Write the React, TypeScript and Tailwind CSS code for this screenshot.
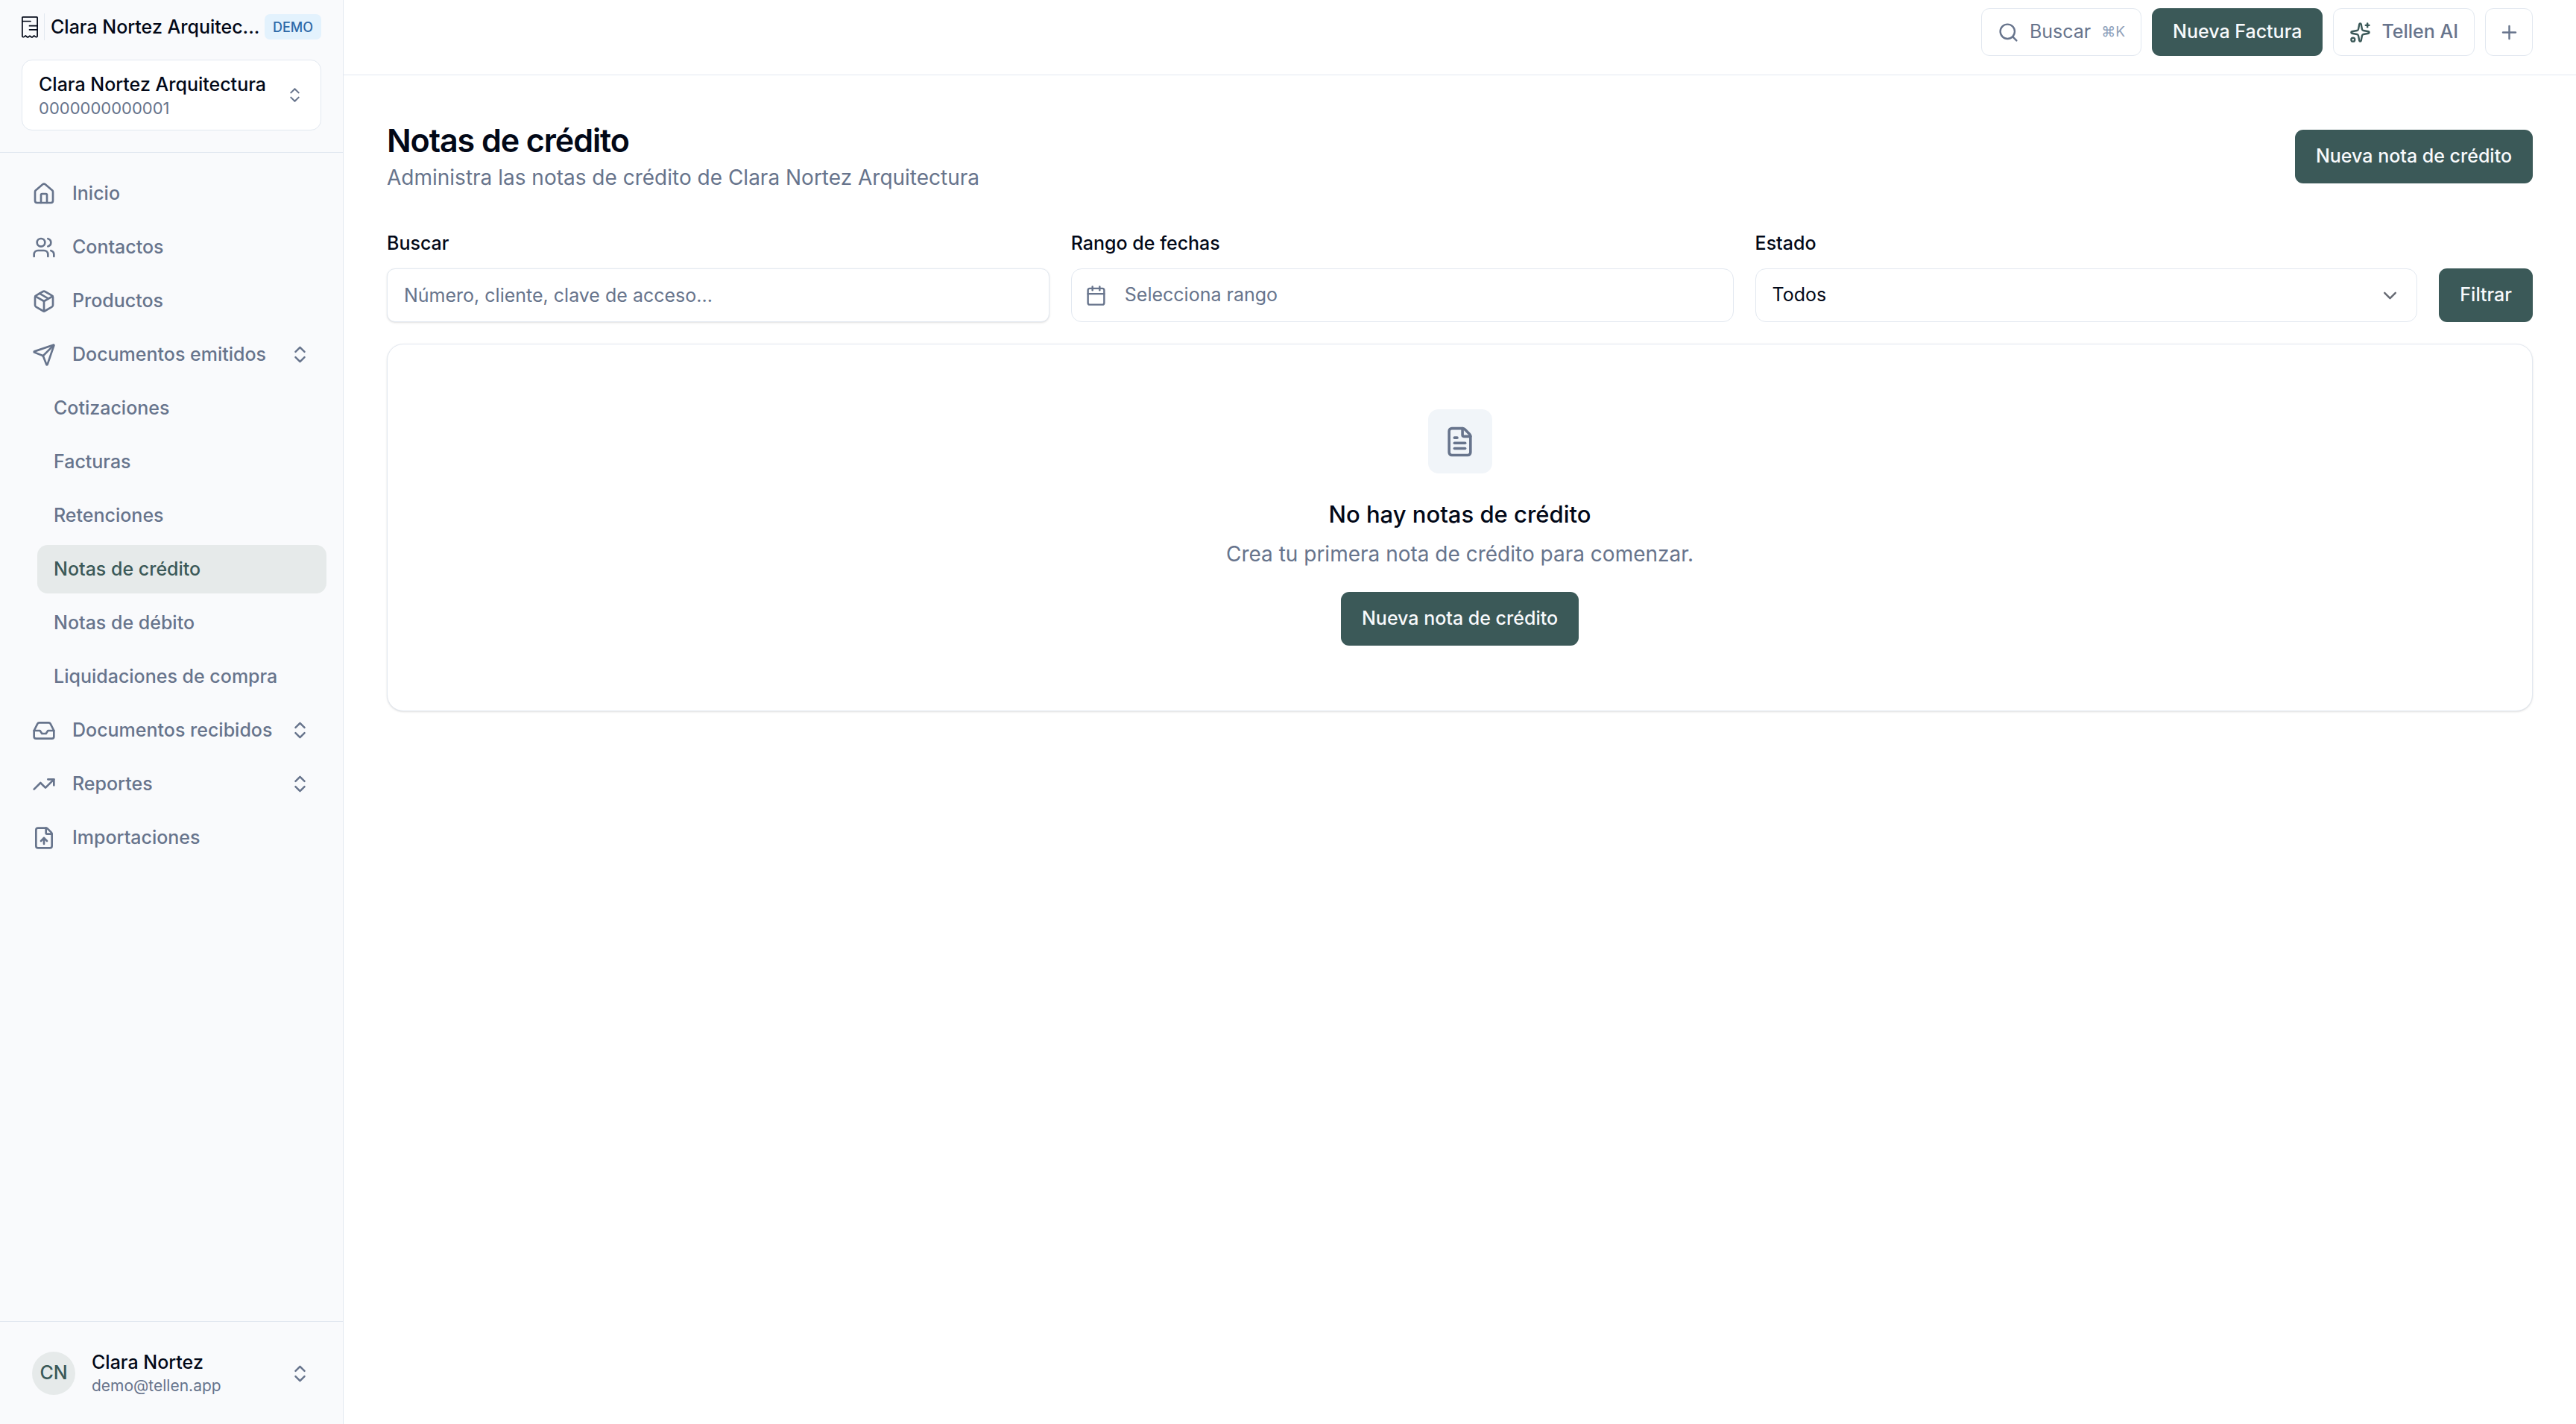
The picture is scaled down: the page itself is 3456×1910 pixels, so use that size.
import {
  House, Users, Package, Send, Inbox, TrendingUp, FileUp, ChevronsUpDown, ChevronDown,
  Search, Plus, Calendar, FileText, type LucideIcon,
} from "lucide-react";

const FONT = "font-['Inter','Liberation_Sans',sans-serif]";

function ReceiptLogo() {
  return (
    <svg viewBox="0 0 22 29" className="h-[29px] w-[22px] shrink-0" fill="none" stroke="#020817" strokeWidth="1.7" strokeLinejoin="round" strokeLinecap="round" aria-hidden="true">
      <path d="M0.9 1.7a0.8 0.8 0 0 1 0.8-0.8h18.600a0.8 0.8 0 0 1 0.8 0.8v25q-1.3 1.8-2.800 0.500l-1.600-1.300-1.900 1.600q-1 0.800-2 0l-1.800-1.400-1.800 1.400q-1 0.800-2 0l-1.900-1.600-1.600 1.300q-1.500 1.300-2.800-0.500z" />
      <path d="M1 6.500h11M10.500 12.700h10.500M10.500 17.800h10.500" />
    </svg>
  );
}

function SparkIcon() {
  return (
    <svg viewBox="0 0 24 24" className="size-[29px] shrink-0" fill="none" stroke="#3b5958" strokeWidth="2" strokeLinecap="round" strokeLinejoin="round" aria-hidden="true">
      <path d="M11.017 2.814a1 1 0 0 1 1.966 0l1.051 5.558a2 2 0 0 0 1.594 1.594l5.558 1.051a1 1 0 0 1 0 1.966l-5.558 1.051a2 2 0 0 0-1.594 1.594l-1.051 5.558a1 1 0 0 1-1.966 0l-1.051-5.558a2 2 0 0 0-1.594-1.594l-5.558-1.051a1 1 0 0 1 0-1.966l5.558-1.051a2 2 0 0 0 1.594-1.594z" />
      <path d="M20 2v4" />
      <path d="M22 4h-4" />
      <circle cx="4" cy="20" r="2" />
    </svg>
  );
}

function NavItem({ icon: Icon, label, expandable }: { icon: LucideIcon; label: string; expandable?: boolean }) {
  const body = (
    <>
      <Icon className="size-8 shrink-0" strokeWidth={2} />
      <span className="flex-1 text-left">{label}</span>
      {expandable && <ChevronsUpDown className="size-[29px] shrink-0" />}
    </>
  );
  const cls = "flex h-[65px] w-full items-center gap-[22px] rounded-[14px] px-[21px] whitespace-nowrap";
  return (
    <li>
      {expandable ? <button type="button" className={cls}>{body}</button> : <a href="#" className={cls}>{body}</a>}
    </li>
  );
}

function SubItem({ label, active }: { label: string; active?: boolean }) {
  return (
    <li>
      <a
        href="#"
        aria-current={active ? "page" : undefined}
        className={`flex h-[65px] items-center rounded-[14px] px-[22px] whitespace-nowrap ${active ? "bg-[#e6eaea] text-[#3b5958]" : ""}`}
      >
        {label}
      </a>
    </li>
  );
}

function Sidebar() {
  return (
    <aside className="flex w-[461px] shrink-0 flex-col border-r border-slate-200 bg-[#f9fafc]">
      <div className="border-b border-slate-200 px-[29px] pt-[18px] pb-[29px]">
        <div className="flex h-9 items-center">
          <ReceiptLogo />
          <div className="mx-2 h-9 w-px shrink-0 bg-slate-200" />
          <span title="Clara Nortez Arquitectura" className="min-w-0 flex-1 text-[25px] leading-9 font-medium whitespace-nowrap">Clara Nortez Arquitec...</span>
          <span className="flex h-[34px] shrink-0 items-center rounded-[7px] bg-[#e3f2fd] px-[11px] text-[18px] font-medium text-[#2f6aa8]">DEMO</span>
        </div>
        <button type="button" className="mt-[26px] flex h-[95px] w-full items-center justify-between rounded-[14px] border border-slate-200 bg-white px-[22px] text-left">
          <span className="flex flex-col pt-0.5 whitespace-nowrap">
            <span className="text-[25px] leading-8 font-medium">Clara Nortez Arquitectura</span>
            <span className="text-[22px] leading-8 text-[#67748c]">0000000000001</span>
          </span>
          <ChevronsUpDown className="size-[25px] shrink-0 text-[#67748c]" />
        </button>
      </div>
      <nav className="flex-1 px-[22px] pt-[22px] text-[25px] font-medium text-[#67748c]">
        <ul className="flex flex-col gap-[7px]">
          <NavItem icon={House} label="Inicio" />
          <NavItem icon={Users} label="Contactos" />
          <NavItem icon={Package} label="Productos" />
          <NavItem icon={Send} label="Documentos emitidos" expandable />
          <li>
            <ul className="ml-7 flex flex-col gap-[7px]">
              <SubItem label="Cotizaciones" />
              <SubItem label="Facturas" />
              <SubItem label="Retenciones" />
              <SubItem label="Notas de crédito" active />
              <SubItem label="Notas de débito" />
              <SubItem label="Liquidaciones de compra" />
            </ul>
          </li>
          <NavItem icon={Inbox} label="Documentos recibidos" expandable />
          <NavItem icon={TrendingUp} label="Reportes" expandable />
          <NavItem icon={FileUp} label="Importaciones" />
        </ul>
      </nav>
      <div className="border-t border-slate-200 px-[22px] pt-[29px] pb-7">
        <button type="button" className="flex h-20 w-full items-center gap-[22px] px-[21px] text-left">
          <span className="flex size-[58px] shrink-0 items-center justify-center rounded-full bg-[#e6eaea] text-[25px] font-medium text-[#3b5958]">CN</span>
          <span className="flex flex-1 flex-col pt-0.5">
            <span className="text-[25px] leading-8 font-medium">Clara Nortez</span>
            <span className="text-[21px] leading-8 text-[#67748c]">demo@tellen.app</span>
          </span>
          <ChevronsUpDown className="size-[29px] shrink-0 text-[#67748c]" />
        </button>
      </div>
    </aside>
  );
}

function TopBar() {
  return (
    <header className="flex items-start justify-end gap-[14px] border-b border-slate-200 px-[58px] pt-[11px] pb-[25px] text-[25px] font-medium whitespace-nowrap text-[#67748c]">
      <button type="button" className="flex h-16 items-center gap-[14px] rounded-[11px] border border-slate-200 px-[21px]">
        <Search className="size-[29px]" />
        <span className="font-normal">Buscar</span>
        <kbd className="font-['Inter','DejaVu_Sans',sans-serif] text-[19px] font-normal text-slate-400">⌘K</kbd>
      </button>
      <button type="button" className="h-16 rounded-[11px] bg-[#3b5958] px-7 text-slate-50">Nueva Factura</button>
      <button type="button" className="flex h-16 items-center gap-[14px] rounded-[11px] border border-slate-200 px-[21px]">
        <SparkIcon />
        Tellen AI
      </button>
      <button type="button" aria-label="Crear" className="flex h-16 w-16 items-center justify-center rounded-[11px] border border-slate-200">
        <Plus className="size-[29px]" />
      </button>
    </header>
  );
}

function NewNoteButton() {
  return (
    <button type="button" className="h-[72px] rounded-[11px] bg-[#3b5958] px-7 text-[25px] font-medium whitespace-nowrap text-slate-50">
      Nueva nota de crédito
    </button>
  );
}

function Filters() {
  return (
    <form className="mt-[54px] flex items-end gap-[29px] text-[25px]">
      <div className="flex flex-1 flex-col gap-[22px]">
        <label htmlFor="buscar" className="leading-6 font-medium">Buscar</label>
        <input id="buscar" type="text" placeholder="Número, cliente, clave de acceso..." className="h-[72px] w-full rounded-[11px] border border-slate-200 bg-white px-[22px] shadow-sm placeholder:text-[#67748c]" />
      </div>
      <div className="flex flex-1 flex-col gap-[22px]">
        <label htmlFor="rango" className="leading-6 font-medium">Rango de fechas</label>
        <button id="rango" type="button" className="flex h-[72px] w-full items-center gap-6 rounded-[14px] border border-slate-200 bg-white px-[18px] text-[#67748c]">
          <Calendar className="size-[29px]" />
          Selecciona rango
        </button>
      </div>
      <div className="flex flex-1 flex-col gap-[22px]">
        <label htmlFor="estado" className="leading-6 font-medium">Estado</label>
        <div className="relative">
          <select id="estado" className="h-[72px] w-full appearance-none rounded-[14px] border border-slate-200 bg-white px-[22px]">
            <option>Todos</option>
          </select>
          <ChevronDown className="pointer-events-none absolute inset-y-0 right-[22px] my-auto size-[29px] opacity-60" />
        </div>
      </div>
      <button type="submit" className="h-[72px] rounded-[11px] bg-[#3b5958] px-7 font-medium text-slate-50">Filtrar</button>
    </form>
  );
}

export default function App() {
  return (
    <div className={`flex min-h-screen bg-white text-[#020817] ${FONT}`}>
      <Sidebar />
      <div className="flex min-w-0 flex-1 flex-col">
        <TopBar />
        <main className="flex flex-col px-[58px] pt-[58px]">
          <div className="flex items-center justify-between">
            <div>
              <h1 className="text-[43px] leading-[58px] font-semibold tracking-tight">Notas de crédito</h1>
              <p className="text-[28px] leading-[43px] text-[#67748c]">Administra las notas de crédito de Clara Nortez Arquitectura</p>
            </div>
            <NewNoteButton />
          </div>
          <Filters />
          <section className="mt-[29px] flex flex-col items-center rounded-[22px] border border-slate-200 bg-white px-8 py-[87px] shadow-sm">
            <div className="flex size-[86px] items-center justify-center rounded-[14px] bg-slate-100">
              <FileText className="size-[43px] text-[#67748c]" />
            </div>
            <h2 className="mt-[30px] text-[31px] leading-[50px] font-medium">No hay notas de crédito</h2>
            <p className="mt-[7px] mb-[29px] text-[28px] leading-[43px] text-[#67748c]">Crea tu primera nota de crédito para comenzar.</p>
            <NewNoteButton />
          </section>
        </main>
      </div>
    </div>
  );
}
